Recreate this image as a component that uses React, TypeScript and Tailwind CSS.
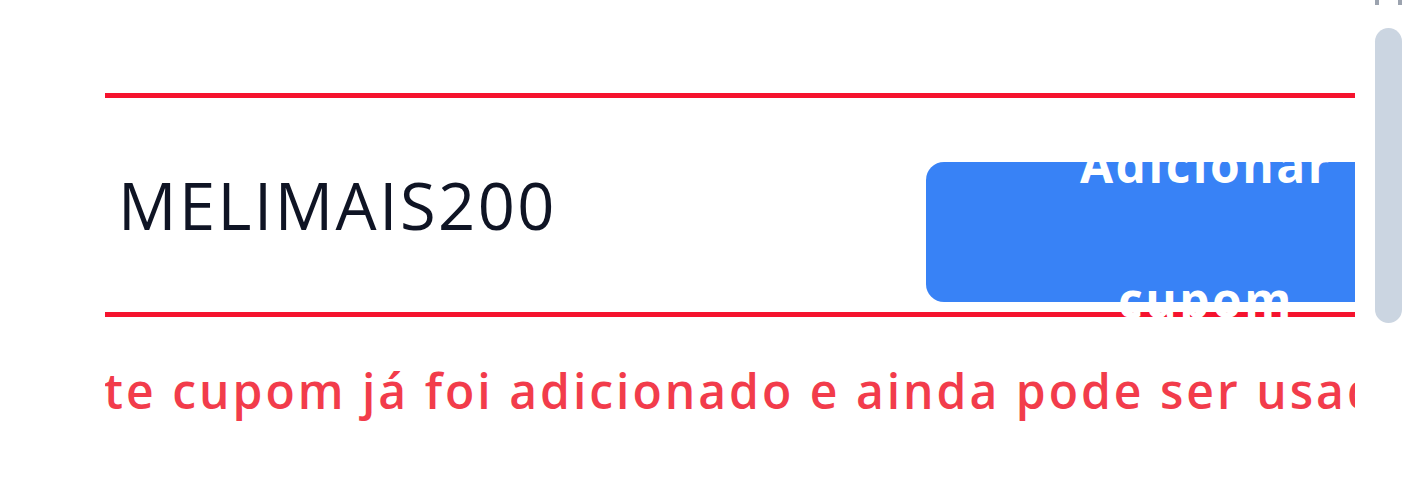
import React from "react"

const CODE = "MELIMAIS200"

export default function App() {
  return (
    <div className="flex h-[500px] w-[1421px] overflow-hidden bg-white font-['Open_Sans',sans-serif]">
      {/* content column, clipped left/right */}
      <div className="ml-[105px] w-[1250px] shrink-0 overflow-x-clip pt-[93px]">
        <div className="relative">
          {/* coupon input */}
          <div className="flex h-[224px] items-center border-y-[5px] border-[#f5132e] pl-[13px]">
            <span className="text-[65px] leading-none tracking-[2.5px] text-[#0f1424]">{CODE}</span>
          </div>

          {/* add button sits over the input */}
          <button className="absolute left-[821px] top-[69px] flex h-[140px] w-[560px] items-center justify-center rounded-[18px] bg-[#3882f6] text-[48px] font-bold leading-[135px] tracking-[2.5px] text-white">
            <span className="block w-[300px] text-center">Adicionar cupom</span>
          </button>
        </div>

        {/* error message */}
        <div className="mt-[44px] flex justify-center">
          <p className="whitespace-nowrap text-[48px] font-semibold leading-[60px] tracking-[3px] text-[#f23c4b]">
            Este cupom já foi adicionado e ainda pode ser usado
          </p>
        </div>
      </div>

      {/* scrollbar */}
      <div className="ml-[20px] flex w-[27px] shrink-0 flex-col">
        <div className="flex h-[5px] justify-between">
          <span className="w-[4px] bg-[#9ca3af]" />
          <span className="w-[4px] bg-[#9ca3af]" />
        </div>
        <div className="mt-[23px] h-[295px] rounded-full bg-[#cbd5e1]" />
      </div>
    </div>
  )
}
